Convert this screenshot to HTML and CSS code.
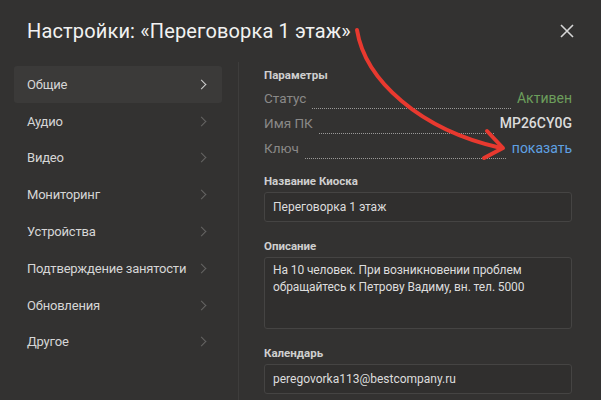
FILE: index.html
```html
<!doctype html>
<html lang="ru">
  <head>
    <meta charset="UTF-8" />
    <meta name="viewport" content="width=device-width, initial-scale=1.0" />
    <title>Настройки киоска</title>
    <link rel="stylesheet" href="styles.css">
  </head>
  <body>
    <div class="dialog">
      <header class="dialog-header">
        <h1 class="dialog-title">Настройки: «Переговорка 1 этаж»</h1>
        <button class="close" aria-label="Закрыть">
          <svg width="16" height="16" viewBox="0 0 16 16">
            <path d="M2 2 L14 14 M14 2 L2 14" stroke="#d6d6d6" stroke-width="1.6" fill="none" />
          </svg>
        </button>
      </header>

      <div class="dialog-body">
        <nav class="nav">
          <div class="nav-item active">Общие <span class="chevron"></span></div>
          <div class="nav-item">Аудио <span class="chevron"></span></div>
          <div class="nav-item">Видео <span class="chevron"></span></div>
          <div class="nav-item">Мониторинг <span class="chevron"></span></div>
          <div class="nav-item">Устройства <span class="chevron"></span></div>
          <div class="nav-item">Подтверждение занятости <span class="chevron"></span></div>
          <div class="nav-item">Обновления <span class="chevron"></span></div>
          <div class="nav-item">Другое <span class="chevron"></span></div>
        </nav>

        <main class="content">
          <h3 class="section-title">Параметры</h3>
          <div class="param">
            <span class="param-name">Статус</span>
            <span class="dots"></span>
            <span class="param-value status">Активен</span>
          </div>
          <div class="param">
            <span class="param-name">Имя ПК</span>
            <span class="dots"></span>
            <span class="param-value pc">MP26CY0G</span>
          </div>
          <div class="param">
            <span class="param-name">Ключ</span>
            <span class="dots"></span>
            <span class="param-value link">показать</span>
          </div>

          <label class="field-label">Название Киоска</label>
          <div class="input">Переговорка 1 этаж</div>

          <label class="field-label">Описание</label>
          <div class="input textarea">На 10 человек. При возникновении проблем обращайтесь к Петрову Вадиму, вн. тел. 5000</div>

          <label class="field-label">Календарь</label>
          <div class="input">peregovorka113@bestcompany.ru</div>
        </main>
      </div>

      <!-- пометка поверх скриншота -->
      <svg class="arrow" width="601" height="400" viewBox="0 0 601 400">
        <path d="M357 30 C365 80 420 130 501 148" stroke="#e8392f" stroke-width="4" fill="none" stroke-linecap="round" />
        <path d="M487 131 L503 148 L484 158" stroke="#e8392f" stroke-width="4" fill="none" stroke-linecap="round" stroke-linejoin="round" />
      </svg>
    </div>
  </body>
</html>
```

FILE: styles.css
```css
* {
  box-sizing: border-box;
  margin: 0;
  padding: 0;
}

body {
  font-family: Roboto, "Liberation Sans", sans-serif;
  background-color: #333231;
  color: #d8d8d8;
}

.dialog {
  position: relative;
  width: 601px;
  height: 400px;
  overflow: hidden;
  background-color: #333231;
}

/* шапка */
.dialog-header {
  display: flex;
  justify-content: space-between;
  align-items: center;
  height: 62px;
  padding: 0 24px 0 27px;
}

.dialog-title {
  font-size: 20px;
  font-weight: 400;
  color: #f2f2f2;
  letter-spacing: 0.15px;
}

.close {
  background: none;
  border: none;
  width: 20px;
  height: 20px;
  display: flex;
  align-items: center;
  justify-content: center;
}

/* меню слева */
.dialog-body {
  display: grid;
  grid-template-columns: 238px 1fr;
  height: 338px;
}

.nav {
  padding: 4px 16px 0 14px;
}

.nav-item {
  display: flex;
  justify-content: space-between;
  align-items: center;
  height: 36.8px;
  padding: 0 17px 0 13px;
  border-radius: 3px;
  font-size: 13px;
  letter-spacing: -0.2px;
  color: #d6d6d6;
}

.nav-item.active {
  background-color: #3b3a39;
}

.chevron {
  width: 7px;
  height: 7px;
  border-top: 1.3px solid #656463;
  border-right: 1.3px solid #656463;
  transform: rotate(45deg);
}

.nav-item.active .chevron {
  border-color: #d0d0d0;
}

/* правая часть */
.content {
  border-left: 1px solid #3e3d3c;
  padding: 5px 29px 0 25px;
}

.section-title {
  font-size: 11.5px;
  font-weight: 700;
  color: #cfcfcf;
  line-height: 16px;
  margin-bottom: 2px;
}

.param {
  display: flex;
  align-items: flex-end;
  height: 25px;
  padding-bottom: 4px;
}

.param-name {
  font-size: 13.5px;
  color: #8a8988;
  line-height: 16px;
}

.dots {
  flex: 1;
  border-bottom: 1px dotted #9a9998;
  margin: 0 6px -3px 6px;
}

.param-value {
  font-size: 14px;
  line-height: 16px;
}

.status {
  color: #6c9e5c;
}

.pc {
  color: #dcdcdc;
  font-weight: 500;
}

.link {
  color: #5fa1e3;
}

.field-label {
  display: block;
  font-size: 11.5px;
  font-weight: 700;
  color: #cfcfcf;
  line-height: 16px;
  margin: 16px 0 3px;
}

.content .field-label:first-of-type {
  margin-top: 13px;
}

.input {
  height: 30px;
  padding: 0 8px;
  display: flex;
  align-items: center;
  border: 1px solid #454443;
  border-radius: 3px;
  background-color: #302f2e;
  font-size: 12px;
  color: #dddddd;
}

.textarea {
  height: 72px;
  align-items: flex-start;
  padding-top: 4px;
  line-height: 17px;
  letter-spacing: -0.1px;
}

.arrow {
  position: absolute;
  left: 0;
  top: 0;
  pointer-events: none;
}
```
